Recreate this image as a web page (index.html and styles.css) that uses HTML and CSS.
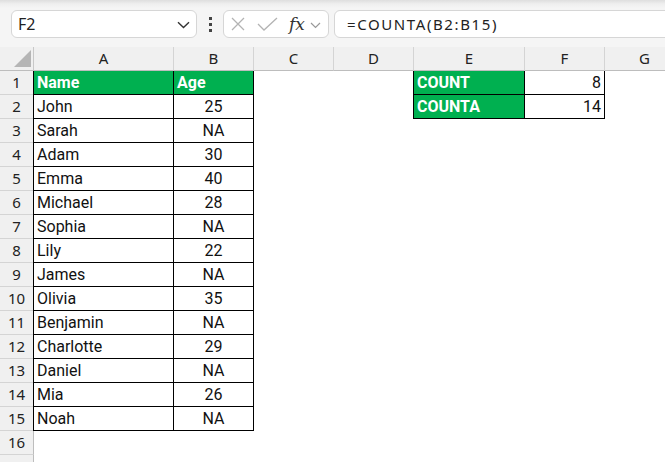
FILE: index.html
```html
<!DOCTYPE html>
<html>
<head>
<meta charset="utf-8">
<link rel="stylesheet" href="styles.css">
</head>
<body>
<div class="top">
  <div class="namebox">
    <span class="ref">F2</span>
    <svg class="chev" width="13" height="8" viewBox="0 0 13 8"><path d="M1 1.2 L6.5 6.5 L12 1.2" fill="none" stroke="#333" stroke-width="1.4"/></svg>
  </div>
  <div class="dots"><i></i><i></i><i></i></div>
  <div class="fxbox">
    <svg class="ico-x" width="14" height="14" viewBox="0 0 14 14"><path d="M1 1 L13 13 M13 1 L1 13" stroke="#b3b3b3" stroke-width="1.3" fill="none"/></svg>
    <svg class="ico-ok" width="21" height="14" viewBox="0 0 21 14"><path d="M1 7 L7 13 L20 1" stroke="#b3b3b3" stroke-width="1.3" fill="none"/></svg>
    <span class="fx">fx</span>
    <svg class="chev-s" width="11" height="7" viewBox="0 0 11 7"><path d="M1 1 L5.5 5.5 L10 1" fill="none" stroke="#999" stroke-width="1.2"/></svg>
  </div>
  <div class="formula">=COUNTA(B2:B15)</div>
</div>
<div class="sheet">
  <div class="row head">
    <div class="corner"><svg width="17" height="17" viewBox="0 0 17 17"><path d="M17 0 L17 17 L0 17 Z" fill="#b5b5b5"/></svg></div>
    <div class="ch">A</div><div class="ch">B</div><div class="ch">C</div><div class="ch">D</div><div class="ch">E</div><div class="ch">F</div><div class="ch">G</div>
  </div>
  <div class="row"><div class="rh">1</div><div class="c t a g">Name</div><div class="c t g">Age</div><div class="c"></div><div class="c"></div><div class="c t e g">COUNT</div><div class="c t n">8</div></div>
  <div class="row"><div class="rh">2</div><div class="c t a">John</div><div class="c t m">25</div><div class="c"></div><div class="c"></div><div class="c t e g">COUNTA</div><div class="c t n">14</div></div>
  <div class="row"><div class="rh">3</div><div class="c t a">Sarah</div><div class="c t m">NA</div></div>
  <div class="row"><div class="rh">4</div><div class="c t a">Adam</div><div class="c t m">30</div></div>
  <div class="row"><div class="rh">5</div><div class="c t a">Emma</div><div class="c t m">40</div></div>
  <div class="row"><div class="rh">6</div><div class="c t a">Michael</div><div class="c t m">28</div></div>
  <div class="row"><div class="rh">7</div><div class="c t a">Sophia</div><div class="c t m">NA</div></div>
  <div class="row"><div class="rh">8</div><div class="c t a">Lily</div><div class="c t m">22</div></div>
  <div class="row"><div class="rh">9</div><div class="c t a">James</div><div class="c t m">NA</div></div>
  <div class="row"><div class="rh">10</div><div class="c t a">Olivia</div><div class="c t m">35</div></div>
  <div class="row"><div class="rh">11</div><div class="c t a">Benjamin</div><div class="c t m">NA</div></div>
  <div class="row"><div class="rh">12</div><div class="c t a">Charlotte</div><div class="c t m">29</div></div>
  <div class="row"><div class="rh">13</div><div class="c t a">Daniel</div><div class="c t m">NA</div></div>
  <div class="row"><div class="rh">14</div><div class="c t a">Mia</div><div class="c t m">26</div></div>
  <div class="row"><div class="rh">15</div><div class="c t a">Noah</div><div class="c t m">NA</div></div>
  <div class="row"><div class="rh">16</div></div>
  <div class="row"><div class="rh">17</div></div>
</div>
</body>
</html>
```
FILE: styles.css
```css
* { box-sizing: border-box; }
html, body { margin: 0; padding: 0; }
body {
  width: 665px;
  height: 462px;
  overflow: hidden;
  background: #ffffff;
  font-family: "Noto Sans", "Liberation Sans", sans-serif;
  color: #222;
}
.top {
  display: flex;
  align-items: flex-start;
  height: 47px;
  padding: 10px 0 0 11px;
  background: linear-gradient(#dedede 0px, #efefef 4px, #f5f5f5 8px, #f5f5f5 100%);
  overflow: hidden;
}
.namebox {
  flex: none;
  width: 186px;
  height: 28px;
  background: #fff;
  border: 1px solid #d6d6d6;
  border-radius: 6px;
  display: flex;
  align-items: center;
  justify-content: space-between;
  padding: 0 6px 0 6px;
}
.ref { font-size: 16px; color: #222; }
.chev { margin-top: 1px; }
.dots {
  flex: none;
  margin-left: 12px;
  height: 28px;
  display: flex;
  flex-direction: column;
  justify-content: center;
  gap: 3px;
}
.dots i { display: block; width: 3px; height: 3px; background: #444; }
.fxbox {
  flex: none;
  margin-left: 11px;
  width: 106px;
  height: 28px;
  background: #fff;
  border: 1px solid #d6d6d6;
  border-radius: 6px;
  display: flex;
  align-items: center;
  padding-left: 7px;
}
.ico-ok { margin-left: 12px; }
.fx {
  margin-left: 11px;
  font-family: "DejaVu Serif", "Liberation Serif", serif;
  font-style: italic;
  font-size: 17px;
  color: #333;
  line-height: 20px;
}
.chev-s { margin-left: 5px; margin-top: 2px; }
.formula {
  margin-left: 5px;
  margin-right: -12px;
  flex: 1;
  height: 28px;
  background: #fff;
  border: 1px solid #d6d6d6;
  border-radius: 6px;
  padding-left: 12px;
  font-size: 15px;
  letter-spacing: 1.6px;
  line-height: 26px;
  color: #222;
  white-space: nowrap;
}
.sheet { background: #fff; }
.row {
  display: grid;
  grid-template-columns: 34px 140px 80px 80px 80px 111px 80px 80px;
  height: 24px;
}
.head { background: #f0f0f0; }
.corner {
  border-right: 1px solid #c8c8c8;
  border-bottom: 1px solid #bdbdbd;
  display: flex;
  align-items: flex-end;
  justify-content: flex-end;
  padding: 0 2px 3px 0;
}
.ch {
  background: #f0f0f0;
  border-right: 1px solid #d4d4d4;
  border-bottom: 1px solid #bdbdbd;
  text-align: center;
  font-size: 15px;
  line-height: 23px;
  color: #222;
}
.rh {
  background: #f0f0f0;
  border-right: 1px solid #bdbdbd;
  border-bottom: 1px solid #d4d4d4;
  text-align: center;
  font-size: 15px;
  line-height: 23px;
  color: #222;
}
.c {
  font-family: Roboto, "Liberation Sans", sans-serif;
  font-size: 16px;
  line-height: 24px;
  padding: 0 3px;
  color: #111;
  white-space: nowrap;
  overflow: hidden;
}
.t {
  border-right: 1px solid #000;
  border-bottom: 1px solid #000;
  padding-top: 1px;
  line-height: 22px;
}
.a, .e { box-shadow: -1px 0 0 #000; overflow: visible; }
.g { background: #00b050; color: #fff; font-weight: bold; }
.m { text-align: center; }
.n { text-align: right; }
```
